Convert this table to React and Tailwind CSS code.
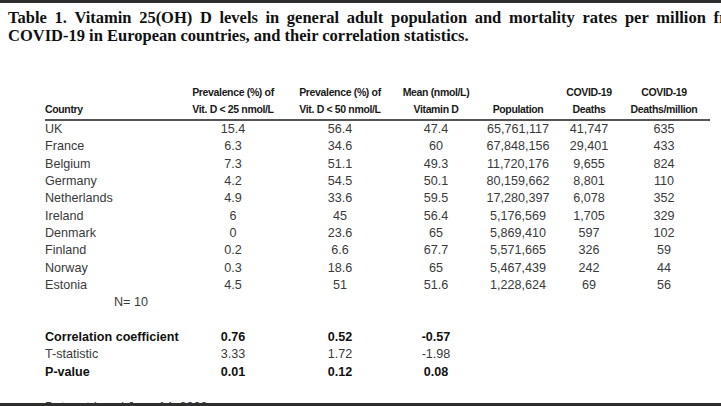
import React from 'react';

const headers = [
  ['', 'Country'],
  ['Prevalence (%) of', 'Vit. D < 25 nmol/L'],
  ['Prevalence (%) of', 'Vit. D < 50 nmol/L'],
  ['Mean (nmol/L)', 'Vitamin D'],
  ['', 'Population'],
  ['COVID-19', 'Deaths'],
  ['COVID-19', 'Deaths/million'],
];

const rows = [
  ['UK', '15.4', '56.4', '47.4', '65,761,117', '41,747', '635'],
  ['France', '6.3', '34.6', '60', '67,848,156', '29,401', '433'],
  ['Belgium', '7.3', '51.1', '49.3', '11,720,176', '9,655', '824'],
  ['Germany', '4.2', '54.5', '50.1', '80,159,662', '8,801', '110'],
  ['Netherlands', '4.9', '33.6', '59.5', '17,280,397', '6,078', '352'],
  ['Ireland', '6', '45', '56.4', '5,176,569', '1,705', '329'],
  ['Denmark', '0', '23.6', '65', '5,869,410', '597', '102'],
  ['Finland', '0.2', '6.6', '67.7', '5,571,665', '326', '59'],
  ['Norway', '0.3', '18.6', '65', '5,467,439', '242', '44'],
  ['Estonia', '4.5', '51', '51.6', '1,228,624', '69', '56'],
];

const stats = [
  { label: 'Correlation coefficient', vals: ['0.76', '0.52', '-0.57'], bold: true },
  { label: 'T-statistic', vals: ['3.33', '1.72', '-1.98'], bold: false },
  { label: 'P-value', vals: ['0.01', '0.12', '0.08'], bold: true },
];

const cols = 'grid grid-cols-[141px_94px_120px_72px_92px_50px_100px]';

function Row({ cells, className = '' }) {
  return (
    <div className={`${cols} h-[17.35px] leading-[17.35px] ${className}`}>
      {cells.map((c, i) => (
        <div key={i} className={i === 0 ? 'text-left whitespace-nowrap' : 'text-center whitespace-nowrap'}>
          {c}
        </div>
      ))}
    </div>
  );
}

export default function App() {
  return (
    <div className="relative w-[721px] h-[406px] overflow-hidden bg-white">
      <div className="h-[3px] bg-[#2e2e2e]" />

      {/* Title */}
      <div className="pl-[8px] pt-[6px] font-['Liberation_Serif',serif] font-bold text-[16.5px] leading-[18px] text-[#111]">
        <div className="w-[740px] whitespace-nowrap">
          <span className="flex justify-between">
            {'Table 1. Vitamin 25(OH) D levels in general adult population and mortality rates per million from'
              .split(' ')
              .map((w, i) => (
                <span key={i}>{w}</span>
              ))}
          </span>
        </div>
        <div className="whitespace-nowrap">COVID-19 in European countries, and their correlation statistics.</div>
      </div>

      {/* Table */}
      <div className="pl-[45px] pt-[39px] font-['Liberation_Sans',Arial,sans-serif]">
        <div className={`${cols} w-[665px] border-b-2 border-[#555] font-bold text-[10.5px] tracking-[-0.35px] text-[#1a1a1a] leading-[17px] pb-[1px]`}>
          {headers.map((h, i) => (
            <div key={i} className={i === 0 ? 'text-left' : 'text-center whitespace-nowrap'}>
              <div className="h-[17px]">{h[0]}</div>
              <div>{h[1]}</div>
            </div>
          ))}
        </div>

        <div className="text-[12.6px] text-[#3a3a3a]">
          {rows.map((r, i) => (
            <Row key={i} cells={r} />
          ))}
          <Row cells={[<span className="pl-[69px]">N= 10</span>, '', '', '', '', '', '']} />
          <Row cells={['', '', '', '', '', '', '']} />
          {stats.map((s, i) => (
            <Row
              key={i}
              cells={[s.label, ...s.vals, '', '', '']}
              className={s.bold ? 'font-bold text-[#111]' : ''}
            />
          ))}
          <Row cells={['', '', '', '', '', '', '']} />
          <div className="h-[17px] leading-[17px] whitespace-nowrap">Data retrieved June 14, 2020</div>
        </div>
      </div>

      <div className="absolute left-0 right-0 bottom-0 h-[3px] bg-[#2e2e2e]" />
    </div>
  );
}
